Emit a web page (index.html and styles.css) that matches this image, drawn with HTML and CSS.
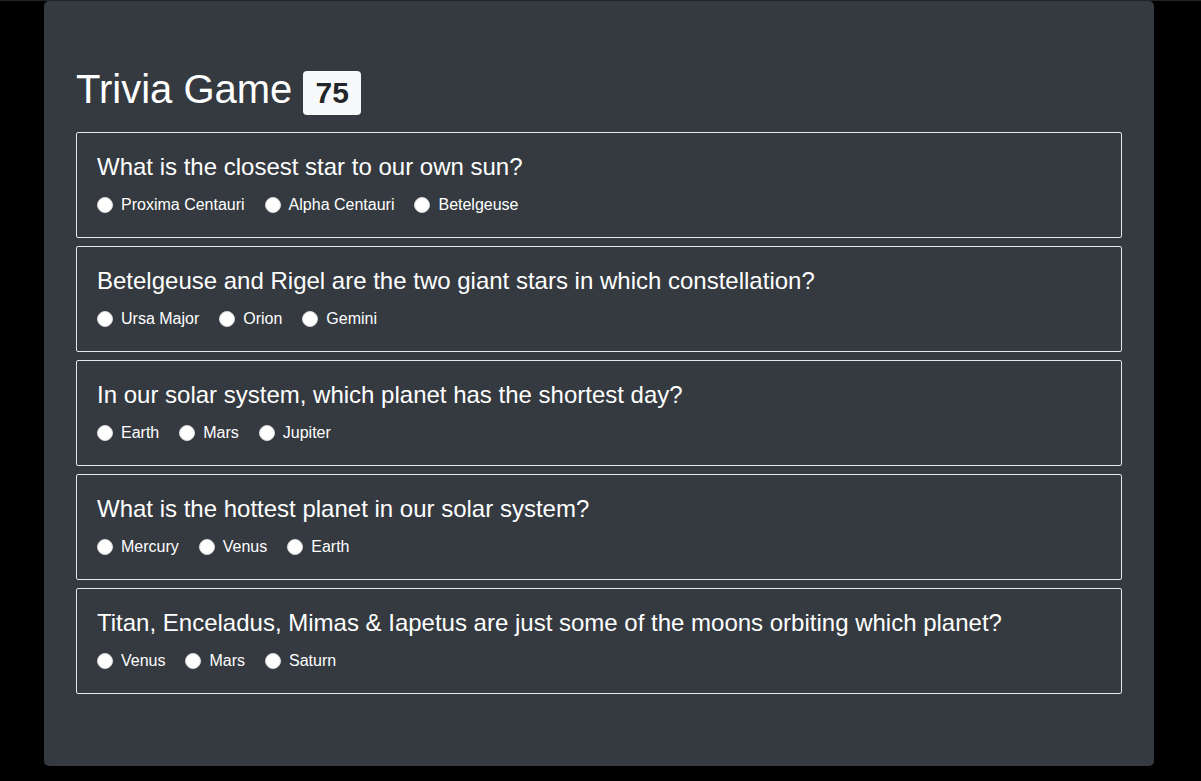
FILE: index.html
```html
<!DOCTYPE html>
<html lang="en">
<head>
<meta charset="utf-8">
<title>Trivia Game</title>
<link rel="stylesheet" href="styles.css">
</head>
<body>
<div class="topline"></div>
<main class="panel">
  <h1 class="title">Trivia Game <span class="badge">75</span></h1>
  <section class="card">
    <h5 class="question">What is the closest star to our own sun?</h5>
    <div class="options">
      <label class="option"><input type="radio" name="q1"><span>Proxima Centauri</span></label>
      <label class="option"><input type="radio" name="q1"><span>Alpha Centauri</span></label>
      <label class="option"><input type="radio" name="q1"><span>Betelgeuse</span></label>
    </div>
  </section>
  <section class="card">
    <h5 class="question">Betelgeuse and Rigel are the two giant stars in which constellation?</h5>
    <div class="options">
      <label class="option"><input type="radio" name="q2"><span>Ursa Major</span></label>
      <label class="option"><input type="radio" name="q2"><span>Orion</span></label>
      <label class="option"><input type="radio" name="q2"><span>Gemini</span></label>
    </div>
  </section>
  <section class="card">
    <h5 class="question">In our solar system, which planet has the shortest day?</h5>
    <div class="options">
      <label class="option"><input type="radio" name="q3"><span>Earth</span></label>
      <label class="option"><input type="radio" name="q3"><span>Mars</span></label>
      <label class="option"><input type="radio" name="q3"><span>Jupiter</span></label>
    </div>
  </section>
  <section class="card">
    <h5 class="question">What is the hottest planet in our solar system?</h5>
    <div class="options">
      <label class="option"><input type="radio" name="q4"><span>Mercury</span></label>
      <label class="option"><input type="radio" name="q4"><span>Venus</span></label>
      <label class="option"><input type="radio" name="q4"><span>Earth</span></label>
    </div>
  </section>
  <section class="card">
    <h5 class="question">Titan, Enceladus, Mimas &amp; Iapetus are just some of the moons orbiting which planet?</h5>
    <div class="options">
      <label class="option"><input type="radio" name="q5"><span>Venus</span></label>
      <label class="option"><input type="radio" name="q5"><span>Mars</span></label>
      <label class="option"><input type="radio" name="q5"><span>Saturn</span></label>
    </div>
  </section>
</main>
</body>
</html>
```

FILE: styles.css
```css
* { box-sizing: border-box; }

html, body {
  margin: 0;
  padding: 0;
  background: #000;
  height: 100%;
}

body {
  font-family: "Liberation Sans", Arial, sans-serif;
  color: #fff;
}

.topline {
  height: 1px;
  background: #222326;
}

.panel {
  width: 1110px;
  margin: 0 0 0 44px;
  height: 765px;
  background: #343a40;
  border-radius: 5px;
  padding: 64px 32px;
}

.title {
  margin: 0 0 17px;
  font-size: 40px;
  font-weight: 400;
  line-height: 48px;
}

.badge {
  display: inline-block;
  background: #f8f9fa;
  color: #212529;
  font-size: 30px;
  font-weight: 700;
  line-height: 1;
  padding: 7px 12px 7px;
  border-radius: 4px;
  vertical-align: baseline;
}

.card {
  border: 1px solid #e4e6e8;
  border-radius: 2px;
  padding: 20px 20px 19px;
  margin-bottom: 8px;
  height: 106px;
}

.question {
  margin: 0;
  font-size: 24px;
  font-weight: 400;
  line-height: 28px;
}

.options {
  display: flex;
  align-items: center;
  margin-top: 12px;
  height: 24px;
}

.option {
  display: flex;
  align-items: center;
  font-size: 16px;
  line-height: 24px;
  margin-right: 20px;
}

.option input {
  appearance: none;
  -webkit-appearance: none;
  width: 16px;
  height: 16px;
  margin: 0 8px 0 0;
  border-radius: 50%;
  background: #fff;
  border: 1px solid #d8d8d8;
}
```
